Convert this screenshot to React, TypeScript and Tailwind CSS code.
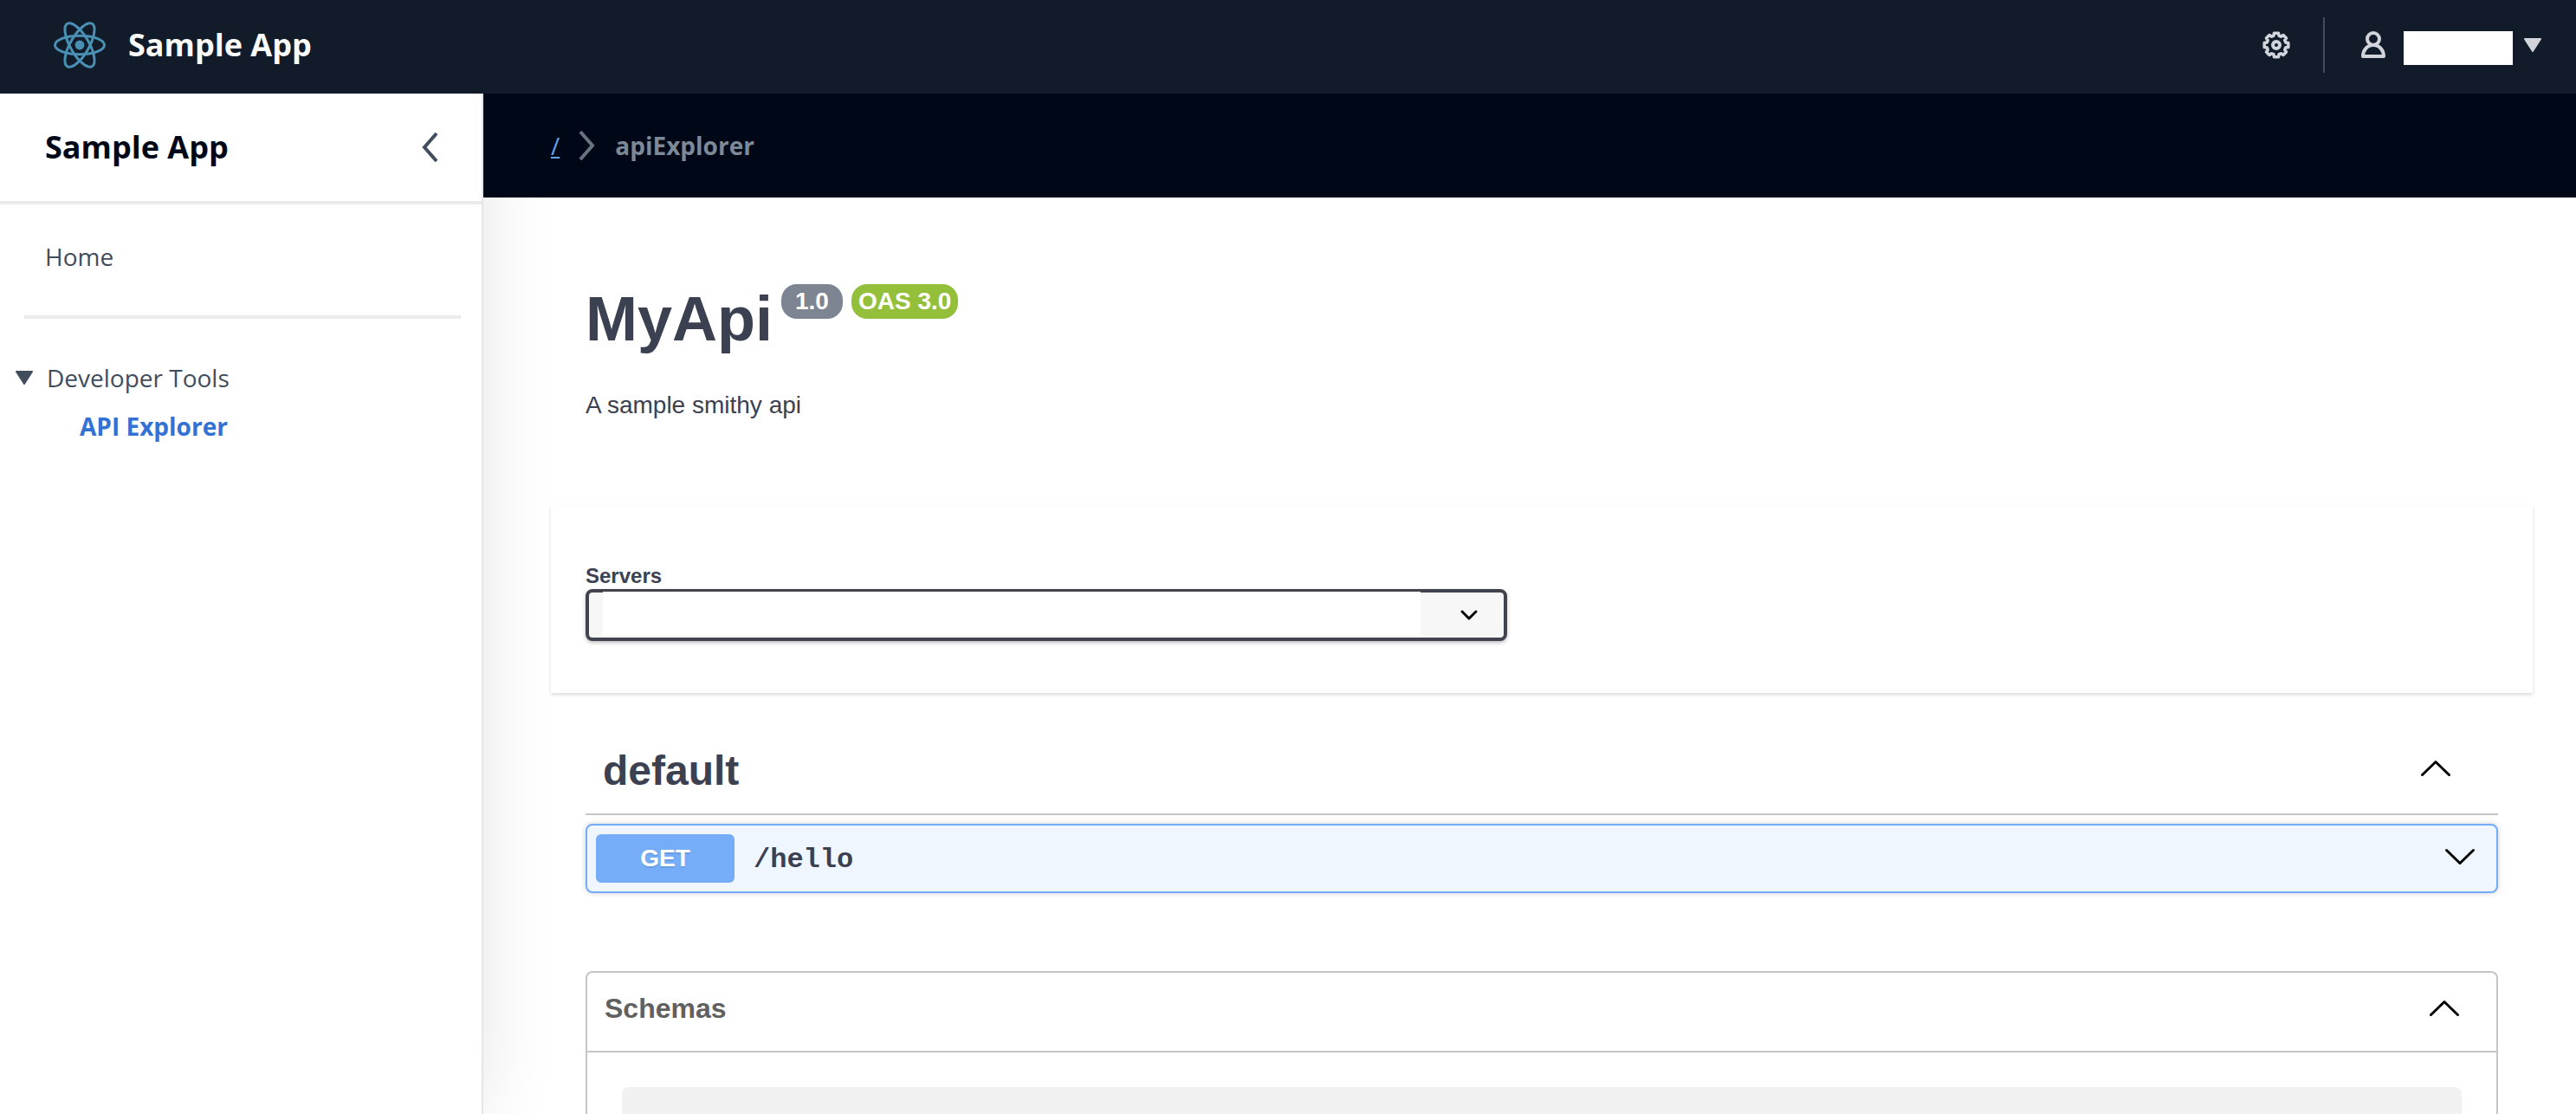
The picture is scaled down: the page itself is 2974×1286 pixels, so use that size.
import React from "react";

function ReactLogo() {
  return (
    <svg className="h-[62px] w-[62px] shrink-0" viewBox="0 0 62 62" fill="none" stroke="#4a90b5" strokeWidth="3" aria-hidden="true">
      <ellipse cx="31" cy="31" rx="28.500" ry="10.800" />
      <ellipse cx="31" cy="31" rx="28.500" ry="10.800" transform="rotate(60 31 31)" />
      <ellipse cx="31" cy="31" rx="28.500" ry="10.800" transform="rotate(120 31 31)" />
      <circle cx="31" cy="31" r="5.400" fill="#4a90b5" stroke="none" />
    </svg>
  );
}

const gearOutline = Array.from({ length: 8 }, (_, tooth) =>
  [
    [-16, 11.2],
    [-10, 14],
    [10, 14],
    [16, 11.2],
  ]
    .map(([offset, radius]) => {
      const angle = ((tooth * 45 + offset) * Math.PI) / 180;
      return `${(radius * Math.cos(angle)).toFixed(2)},${(radius * Math.sin(angle)).toFixed(2)}`;
    })
    .join(" "),
).join(" ");

function GearIcon() {
  return (
    <svg className="h-8 w-8" viewBox="-16 -16 32 32" fill="none" stroke="#d1d5db" strokeWidth="4" strokeLinejoin="round" aria-hidden="true">
      <polygon points={gearOutline} strokeWidth="3.6" />
      <circle r="4" />
    </svg>
  );
}

function UserIcon() {
  return (
    <svg className="h-8 w-7" viewBox="0 0 28 32" fill="none" stroke="#d1d5db" strokeWidth="4" strokeLinejoin="round" aria-hidden="true">
      <circle cx="14" cy="9" r="7" />
      <path d="M2 29c0-7 5-13 12-13s12 6 12 13z" />
    </svg>
  );
}

function Triangle({ className }: { className: string }) {
  return (
    <svg className={className} viewBox="0 0 20 16" fill="currentColor" stroke="currentColor" strokeWidth="2" strokeLinejoin="round" aria-hidden="true">
      <path d="M1 1h18l-9 14z" />
    </svg>
  );
}

function Chevron({ up = false }: { up?: boolean }) {
  return (
    <svg className="h-5 w-9" viewBox="0 0 36 20" fill="none" stroke="#000" strokeWidth="3" strokeLinecap="round" strokeLinejoin="round" aria-hidden="true">
      <path d={up ? "M2.5 17.5L18 2.5l15.5 15" : "M2.5 2.5l15.5 15 15.5-15"} />
    </svg>
  );
}

function TopBar() {
  return (
    <header className="relative z-20 flex h-[108px] shrink-0 items-center justify-between bg-[#121b29] pr-10 pb-1 pl-[61px] font-['Open_Sans',sans-serif]">
      <a href="#" className="flex items-center gap-[25px] text-4xl font-bold text-[#fbfbfb]">
        <ReactLogo />
        Sample App
      </a>
      <div className="flex items-center">
        <button type="button" aria-label="Settings">
          <GearIcon />
        </button>
        <div className="mr-[42px] ml-[38px] h-16 w-0.5 bg-[#414d5c]" />
        <button type="button" aria-label="Account" className="flex items-center text-[#d1d5db]">
          <UserIcon />
          <span className="mt-[7px] mr-[13px] ml-[21px] h-[39px] w-[126px] bg-white" />
          <Triangle className="h-4 w-5" />
        </button>
      </div>
    </header>
  );
}

function Sidebar() {
  return (
    <aside className="relative z-10 w-[558px] shrink-0 border-r-2 border-[#e4e6e9] bg-white font-['Open_Sans',sans-serif] text-[28px] leading-10 text-[#414d5c] shadow-[0_0_80px_rgba(0,0,0,0.1)]">
      <div className="flex h-32 items-center justify-between border-b-4 border-[#e9ebed] pr-[50px] pl-[52px]">
        <h2 className="text-4xl font-bold text-[#000716]">Sample App</h2>
        <button type="button" aria-label="Close navigation">
          <svg className="h-9 w-5" viewBox="0 0 20 36" fill="none" stroke="#414d5c" strokeWidth="4" aria-hidden="true">
            <path d="M18 2L4 18l14 16" />
          </svg>
        </button>
      </div>
      <nav className="pt-10">
        <a href="#" className="ml-[52px] block">Home</a>
        <hr className="mr-6 ml-7 my-12 border-t-4 border-[#e9ebed]" />
        <button type="button" className="flex items-center gap-4 pl-[18px]">
          <Triangle className="h-4 w-5" />
          Developer Tools
        </button>
        <a href="#" className="mt-4 ml-[92px] block font-bold text-[#3371d4]">API Explorer</a>
      </nav>
    </aside>
  );
}

function Breadcrumbs() {
  return (
    <nav aria-label="Breadcrumb" className="relative z-20 flex h-[120px] shrink-0 items-center bg-[#000716] pl-[78px] font-['Open_Sans',sans-serif] text-[28px] leading-10">
      <a href="#" className="text-[#64a2ee] underline">/</a>
      <svg className="mx-[22px] h-9 w-5" viewBox="0 0 20 36" fill="none" stroke="#687384" strokeWidth="4" aria-hidden="true">
        <path d="M2 2l14 16L2 34" />
      </svg>
      <span className="font-bold text-[#7d8998]">apiExplorer</span>
    </nav>
  );
}

function ApiInfo() {
  return (
    <section className="px-10 pt-[100px] pb-[95px]">
      <div className="flex items-start gap-[10px]">
        <h1 className="text-[72px] leading-[80px] font-bold">MyApi</h1>
        <span className="rounded-[18px] bg-[#7d8492] px-4 text-[28px] leading-10 font-bold text-white">1.0</span>
        <span className="rounded-[18px] bg-[#94bf3b] px-2 text-[28px] leading-10 font-bold text-white">OAS 3.0</span>
      </div>
      <p className="mt-10 text-[28px] leading-10">A sample smithy api</p>
    </section>
  );
}

function Servers() {
  return (
    <section className="bg-white px-10 pt-[68px] pb-[60px] shadow-[0_2px_4px_rgba(0,0,0,0.15)]">
      <label htmlFor="servers" className="block text-2xl leading-7 font-bold">Servers</label>
      <div className="relative mt-px w-[1064px] max-w-full">
        <select id="servers" className="block h-[60px] w-full appearance-none rounded-lg border-4 border-[#41444e] bg-[#f7f7f7] shadow-[0_2px_4px_rgba(0,0,0,0.25)]" />
        <div className="pointer-events-none absolute top-[3px] right-[100px] left-5 h-[50px] bg-white" />
        <svg className="pointer-events-none absolute top-6 right-[34px] h-3 w-5" viewBox="0 0 20 12" fill="none" stroke="#000" strokeWidth="3" strokeLinecap="round" strokeLinejoin="round" aria-hidden="true">
          <path d="M2 2l8 8 8-8" />
        </svg>
      </div>
    </section>
  );
}

function Operations() {
  return (
    <section className="px-10 pt-10">
      <h3 className="border-b-2 border-[#c4c6cb] text-5xl leading-[60px] font-bold">
        <button type="button" aria-expanded="true" className="flex w-full items-start justify-between pt-5 pr-[54px] pb-[19px] pl-5 text-left">
          default
          <span className="flex h-[54px] items-center">
            <Chevron up />
          </span>
        </button>
      </h3>
      <button type="button" aria-expanded="false" className="mt-[10px] flex h-20 w-full items-center rounded-lg border-2 border-[#73acf7] bg-[#eff6ff] pr-6 pl-[10px] shadow-[0_0_6px_rgba(0,0,0,0.19)]">
        <span className="w-40 rounded-md bg-[#76adf8] text-center text-[28px] leading-[56px] font-bold text-white [text-shadow:0_2px_0_rgba(0,0,0,0.1)]">GET</span>
        <span className="ml-[22px] flex-1 pt-1 text-left font-['Liberation_Mono',monospace] text-[32px] leading-10 font-bold">/hello</span>
        <span className="pb-1">
          <Chevron />
        </span>
      </button>
    </section>
  );
}

function Schemas() {
  return (
    <section className="mx-10 mt-[90px] rounded-t-lg border-2 border-b-0 border-[#c4c6cb]">
      <h4 className="border-b-2 border-[#c4c6cb] text-[32px] leading-10 font-bold text-[#606060]">
        <button type="button" aria-expanded="true" className="flex h-[90px] w-full items-center justify-between pr-[42px] pb-2 pl-5 text-left">
          Schemas
          <Chevron up />
        </button>
      </h4>
      <div className="mx-10 mt-10 h-20 rounded-lg bg-[#f1f1f1]" />
    </section>
  );
}

export default function App() {
  return (
    <div className="flex h-screen flex-col overflow-hidden bg-white">
      <TopBar />
      <div className="flex min-h-0 flex-1">
        <Sidebar />
        <div className="flex min-w-0 flex-1 flex-col">
          <Breadcrumbs />
          <main className="min-h-0 flex-1 overflow-hidden pr-[50px] pl-[78px] font-['Liberation_Sans',sans-serif] text-[#3b4151]">
            <ApiInfo />
            <Servers />
            <Operations />
            <Schemas />
          </main>
        </div>
      </div>
    </div>
  );
}
